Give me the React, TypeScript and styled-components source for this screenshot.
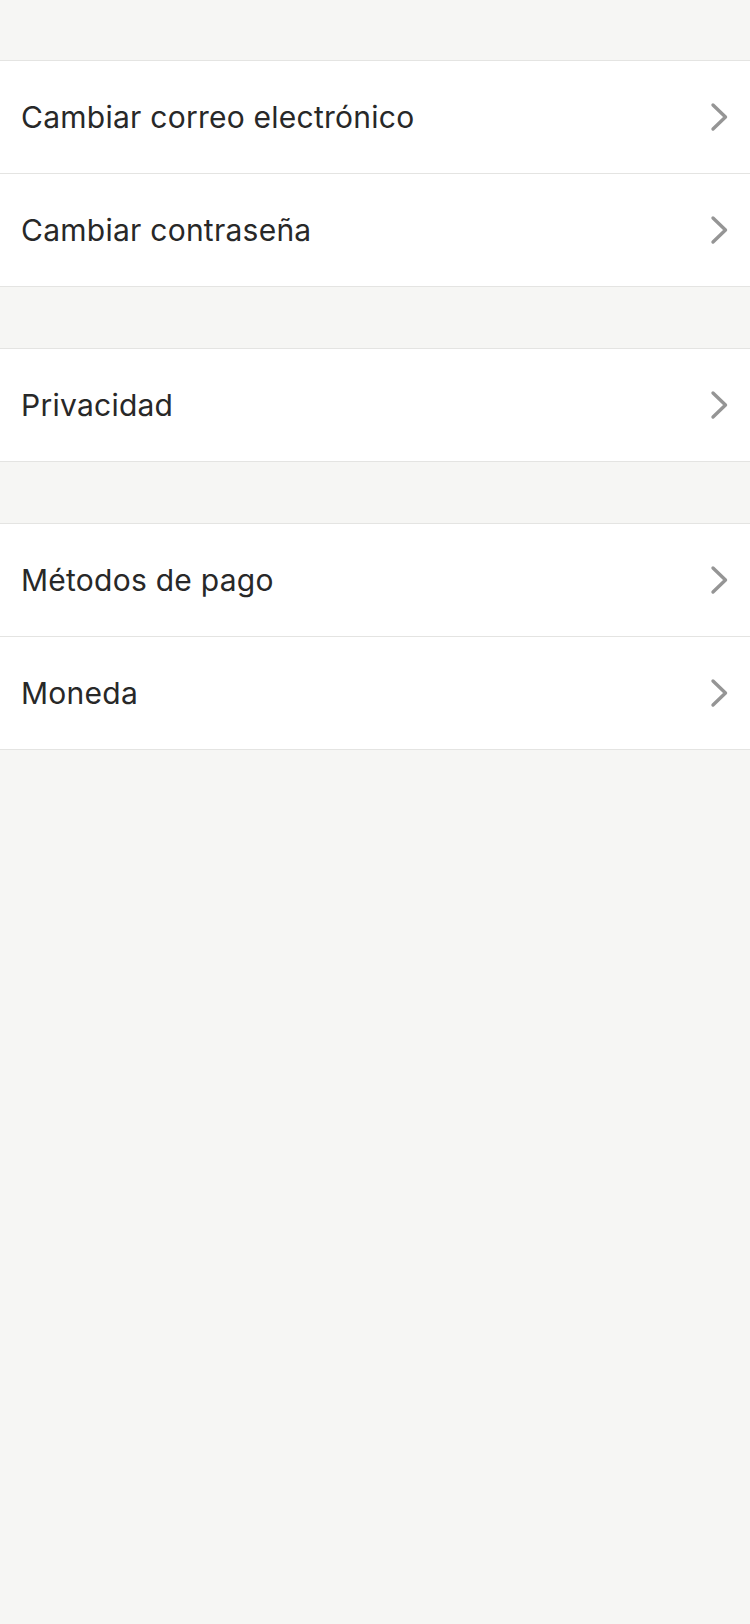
import React from "react";
import styled, { createGlobalStyle } from "styled-components";

const Global = createGlobalStyle`
  html, body { margin: 0; padding: 0; background: #f6f6f4; }
  body { font-family: Inter, "Noto Sans", "Liberation Sans", sans-serif; }
`;

const Page = styled.div`
  min-height: 1624px;
  background: #f6f6f4;
  padding-top: 60px;
  display: flex;
  flex-direction: column;
  gap: 61px;
`;

const Group = styled.div`
  background: #fff;
  border-top: 1px solid #e4e4e2;
  display: flex;
  flex-direction: column;
`;

const Row = styled.div`
  height: 112px;
  border-bottom: 1px solid #e4e4e2;
  display: flex;
  align-items: center;
  justify-content: space-between;
  padding: 0 21px 0 21px;
`;

const Label = styled.span`
  font-size: 30px;
  color: #282828;
  letter-spacing: 0.25px;
`;

const Chevron = () => (
  <svg width="19" height="30" viewBox="0 0 19 30">
    <path d="M3 3 L15.5 15 L3 27" fill="none" stroke="#959595" strokeWidth="3.4" strokeLinecap="round" strokeLinejoin="round" />
  </svg>
);

const groups = [
  ["Cambiar correo electrónico", "Cambiar contraseña"],
  ["Privacidad"],
  ["Métodos de pago", "Moneda"],
];

export default function App() {
  return (
    <>
      <Global />
      <Page>
        {groups.map((g, i) => (
          <Group key={i}>
            {g.map((t) => (
              <Row key={t}>
                <Label>{t}</Label>
                <Chevron />
              </Row>
            ))}
          </Group>
        ))}
      </Page>
    </>
  );
}
